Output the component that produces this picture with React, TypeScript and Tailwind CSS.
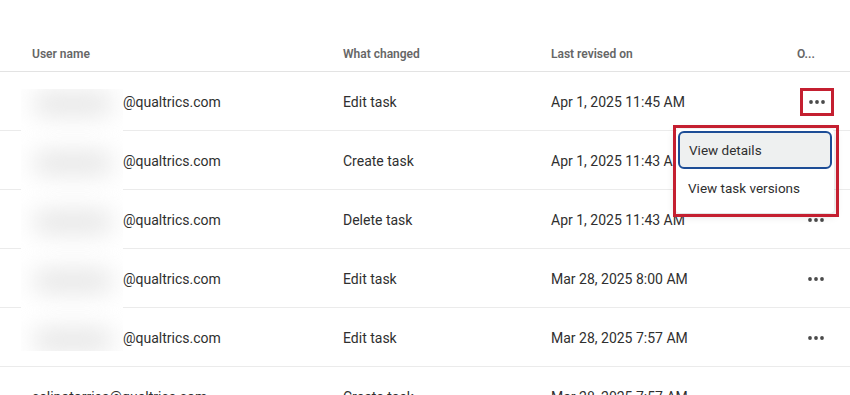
import React from "react";

const rows = [
  { user: "@qualtrics.com", what: "Edit task", when: "Apr 1, 2025 11:45 AM" },
  { user: "@qualtrics.com", what: "Create task", when: "Apr 1, 2025 11:43 AM" },
  { user: "@qualtrics.com", what: "Delete task", when: "Apr 1, 2025 11:43 AM" },
  { user: "@qualtrics.com", what: "Edit task", when: "Mar 28, 2025 8:00 AM" },
  { user: "@qualtrics.com", what: "Edit task", when: "Mar 28, 2025 7:57 AM" },
  { user: "celinotorrisa@qualtrics.com", what: "Create task", when: "Mar 28, 2025 7:57 AM", full: true },
];

function Dots() {
  return (
    <svg width="16" height="4" viewBox="0 0 16 4" className="block">
      <circle cx="2" cy="2" r="1.9" fill="#4a4a4a" />
      <circle cx="8" cy="2" r="1.9" fill="#4a4a4a" />
      <circle cx="14" cy="2" r="1.9" fill="#4a4a4a" />
    </svg>
  );
}

export default function App() {
  return (
    <div
      className="relative w-[850px] h-[395px] overflow-hidden bg-white text-[#2f2f2f]"
      style={{ fontFamily: "Roboto, 'Liberation Sans', sans-serif" }}
    >
      <div className="grid grid-cols-[311px_208px_246px_1fr] pl-[32px] h-[72px] items-end pb-[8px] border-b border-[#e3e3e3] text-[12px] font-semibold text-[#666666]">
        <div>User name</div>
        <div>What changed</div>
        <div>Last revised on</div>
        <div>O...</div>
      </div>
      {rows.map((r, i) => (
        <div
          key={i}
          className="grid grid-cols-[311px_208px_246px_1fr] pl-[32px] h-[59px] items-center pt-[3px] border-b border-[#ebebeb] text-[14px]"
        >
          <div className={r.full ? "" : "pl-[91px]"}>{r.user}</div>
          <div>{r.what}</div>
          <div>{r.when}</div>
          <div className="flex items-center -mt-[2px]">
            {i === 0 ? (
              <div className="ml-[3px] flex items-center justify-center w-[34px] h-[28px] border-[3px] border-[#c41f30]">
                <Dots />
              </div>
            ) : (
              <div className="ml-[11px]">
                <Dots />
              </div>
            )}
          </div>
        </div>
      ))}

      {/* blurred redaction */}
      <div className="absolute left-[21px] top-[89px] w-[102px] h-[262px] bg-white overflow-hidden">
        {[0, 1, 2, 3, 4].map((k) => (
          <div
            key={k}
            className="absolute left-[12px] w-[80px] h-[22px] rounded-full bg-[#e4e4e4] blur-md"
            style={{ top: 4 + k * 59 }}
          />
        ))}
      </div>

      {/* menu */}
      <div className="absolute left-[676px] top-[129px] w-[158px] h-[84px] bg-white rounded-[4px] shadow-[0_2px_10px_rgba(0,0,0,0.18)] p-[2px]">
        <div className="h-[38px] flex items-center pl-[9px] rounded-[6px] border-2 border-[#1d4d96] bg-[#eef0f0] text-[13.5px] text-[#2f2f2f]">
          View details
        </div>
        <div className="h-[38px] flex items-center pl-[10px] text-[13.5px] text-[#2f2f2f]">
          View task versions
        </div>
      </div>
      <div className="absolute left-[673px] top-[125px] w-[166px] h-[92px] border-[3px] border-[#c41f30] pointer-events-none" />
    </div>
  );
}
